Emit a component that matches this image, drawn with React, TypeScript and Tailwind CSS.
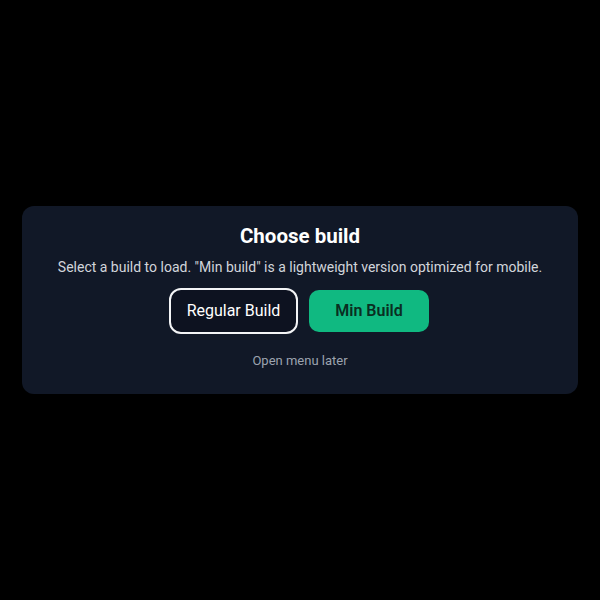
import React from "react";

export default function App() {
  return (
    <div className="w-[600px] h-[600px] bg-black flex items-center justify-center" style={{ fontFamily: "Roboto, 'Liberation Sans', sans-serif" }}>
      <div className="w-[556px] h-[188px] bg-[#111827] rounded-[12px] flex flex-col items-center pt-[16px]">
        <h1 className="text-[20.5px] leading-[28px] font-bold text-white">Choose build</h1>
        <p className="mt-[7px] text-[14px] leading-[20px] text-[#d1d5db]">
          Select a build to load. "Min build" is a lightweight version optimized for mobile.
        </p>
        <div className="mt-[11px] flex items-center gap-[11px] pr-[2px]">
          <button className="w-[129px] h-[46px] rounded-[12px] border-2 border-[#f3f4f6] bg-[#0d1220] text-white text-[16px]">
            Regular Build
          </button>
          <button className="w-[120px] h-[42px] rounded-[10px] bg-[#10b981] text-[#0a2e22] text-[16px] font-semibold">
            Min Build
          </button>
        </div>
        <div className="mt-[18px] text-[13px] leading-[18px] text-[#9ca3af]">Open menu later</div>
      </div>
    </div>
  );
}
